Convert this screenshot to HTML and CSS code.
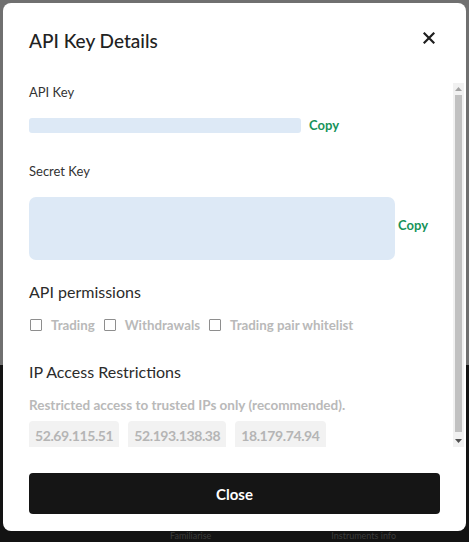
FILE: index.html
```html
<!DOCTYPE html>
<html lang="en">
<head>
    <meta charset="UTF-8">
    <title>API Key Details</title>
    <link rel="stylesheet" href="styles.css">
</head>
<body>
    <div class="page">
        <div class="page-top"></div>
        <div class="page-footer">
            <span class="foot-link">Familiarise</span>
            <span class="foot-link">Instruments info</span>
        </div>
    </div>

    <div class="modal">
        <div class="modal-header">
            <h2 class="modal-title">API Key Details</h2>
            <button class="modal-x" type="button" aria-label="Close">
                <svg width="12" height="12" viewBox="0 0 12 12">
                    <path d="M1.5 1.5L10.5 10.5M10.5 1.5L1.5 10.5" stroke="#1e1e1e" stroke-width="2.2" stroke-linecap="square"/>
                </svg>
            </button>
        </div>

        <div class="modal-body">
            <div class="scroll-content">
                <div class="field">
                    <div class="field-label">API Key</div>
                    <div class="key-row key-row-short">
                        <div class="key-box key-short"></div>
                        <a class="copy" href="#">Copy</a>
                    </div>
                </div>

                <div class="field">
                    <div class="field-label">Secret Key</div>
                    <div class="key-row key-row-secret">
                        <div class="key-box key-secret"></div>
                        <a class="copy copy-secret" href="#">Copy</a>
                    </div>
                </div>

                <div class="section">
                    <div class="section-title">API permissions</div>
                    <div class="perm-row">
                        <label class="perm"><span class="check"></span>Trading</label>
                        <label class="perm"><span class="check"></span>Withdrawals</label>
                        <label class="perm"><span class="check"></span>Trading pair whitelist</label>
                    </div>
                </div>

                <div class="section section-last">
                    <div class="section-title">IP Access Restrictions</div>
                    <div class="hint">Restricted access to trusted IPs only (recommended).</div>
                    <div class="ip-list">
                        <span class="ip">52.69.115.51</span>
                        <span class="ip">52.193.138.38</span>
                        <span class="ip">18.179.74.94</span>
                    </div>
                </div>
            </div>

            <div class="scrollbar">
                <div class="sb-arrow">
                    <svg width="7" height="4" viewBox="0 0 7 4"><path d="M0 4L3.5 0L7 4Z" fill="#a3a3a3"/></svg>
                </div>
                <div class="sb-track"><div class="sb-thumb"></div></div>
                <div class="sb-arrow">
                    <svg width="7" height="4" viewBox="0 0 7 4"><path d="M0 0L7 0L3.5 4Z" fill="#505050"/></svg>
                </div>
            </div>
        </div>

        <div class="modal-footer">
            <button class="btn-close" type="button">Close</button>
        </div>
    </div>
</body>
</html>
```

FILE: styles.css
```css
* {
    box-sizing: border-box;
}

html, body {
    margin: 0;
    height: 100%;
    overflow: hidden;
}

body {
    font-family: Lato, "Open Sans", sans-serif;
    color: #2b2b2b;
}

.page {
    height: 100%;
    display: flex;
    flex-direction: column;
}

.page-top {
    flex: 0 0 365px;
    background-color: #707070;
}

.page-footer {
    flex: 1;
    background-color: #131313;
    display: flex;
    align-items: flex-end;
    gap: 120px;
    padding-left: 170px;
    padding-bottom: 1px;
}

.foot-link {
    color: #3c3c3c;
    font-size: 9px;
    line-height: 10px;
}

.modal {
    position: fixed;
    top: 3px;
    left: 3px;
    right: 3px;
    bottom: 11px;
    background-color: white;
    border-radius: 8px;
    display: flex;
    flex-direction: column;
}

.modal-header {
    display: flex;
    align-items: flex-start;
    justify-content: space-between;
    padding: 24px 31px 0 26px;
    height: 80px;
    flex: 0 0 80px;
}

.modal-title {
    margin: 2px 0 0;
    font-size: 19px;
    font-weight: 500;
    color: #222;
}

.modal-x {
    border: none;
    background: none;
    padding: 0;
    margin-top: 5px;
    cursor: pointer;
    line-height: 0;
}

.modal-body {
    flex: 0 0 364px;
    height: 364px;
    min-height: 0;
    overflow: hidden;
    display: flex;
    margin-right: 2px;
}

.scroll-content {
    flex: 1;
    overflow: hidden;
    padding-left: 26px;
}

.scrollbar {
    width: 11px;
    background-color: #f1f1f1;
    display: flex;
    flex-direction: column;
}

.sb-arrow {
    height: 12px;
    display: flex;
    align-items: center;
    justify-content: center;
}

.sb-track {
    flex: 1;
    padding: 0 2px 3px;
}

.sb-thumb {
    height: 100%;
    background-color: #c1c1c1;
}

.field-label {
    font-size: 13px;
    color: #333;
    line-height: 18px;
    margin-bottom: 17px;
}

.field:first-child .field-label {
    margin-bottom: 16px;
}

.key-row {
    display: flex;
    align-items: center;
}

.key-row-short {
    gap: 8px;
    margin-bottom: 29px;
}

.key-row-secret {
    gap: 3px;
    margin-bottom: 21px;
}

.key-box {
    background-color: #dde9f6;
}

.key-short {
    width: 272px;
    height: 15px;
    border-radius: 3px;
}

.key-secret {
    width: 366px;
    height: 63px;
    border-radius: 7px;
}

.copy {
    color: #17935a;
    font-size: 13px;
    font-weight: 700;
    text-decoration: none;
}

.copy-secret {
    padding-bottom: 8px;
}

.section {
    margin-bottom: 28px;
}

.section-last {
    margin-bottom: 0;
}

.section-title {
    font-size: 16px;
    color: #2b2b2b;
    line-height: 22px;
    margin-bottom: 14px;
}

.perm-row {
    display: flex;
    align-items: center;
    gap: 8px;
}

.perm {
    display: flex;
    align-items: center;
    gap: 9px;
    color: #b9b9b9;
    font-size: 13.3px;
    font-weight: 700;
}

.check {
    width: 12px;
    height: 12px;
    border: 1px solid #8e8e8e;
    border-radius: 1px;
    margin-left: 1px;
}

.hint {
    color: #b9b9b9;
    font-size: 13.5px;
    font-weight: 700;
    margin-bottom: 8px;
}

.ip-list {
    display: flex;
    gap: 9px;
}

.ip {
    background-color: #f2f2f2;
    color: #b5b5b5;
    border-radius: 4px;
    font-size: 14px;
    font-weight: 700;
    letter-spacing: -0.4px;
    padding: 5px 6px 6px;
    line-height: 19px;
}

.modal-footer {
    padding: 26px 26px 17px;
}

.btn-close {
    width: 411px;
    height: 41px;
    border: none;
    border-radius: 4px;
    background-color: #151515;
    color: white;
    font-family: inherit;
    font-size: 15px;
    font-weight: 700;
    cursor: pointer;
}
```
